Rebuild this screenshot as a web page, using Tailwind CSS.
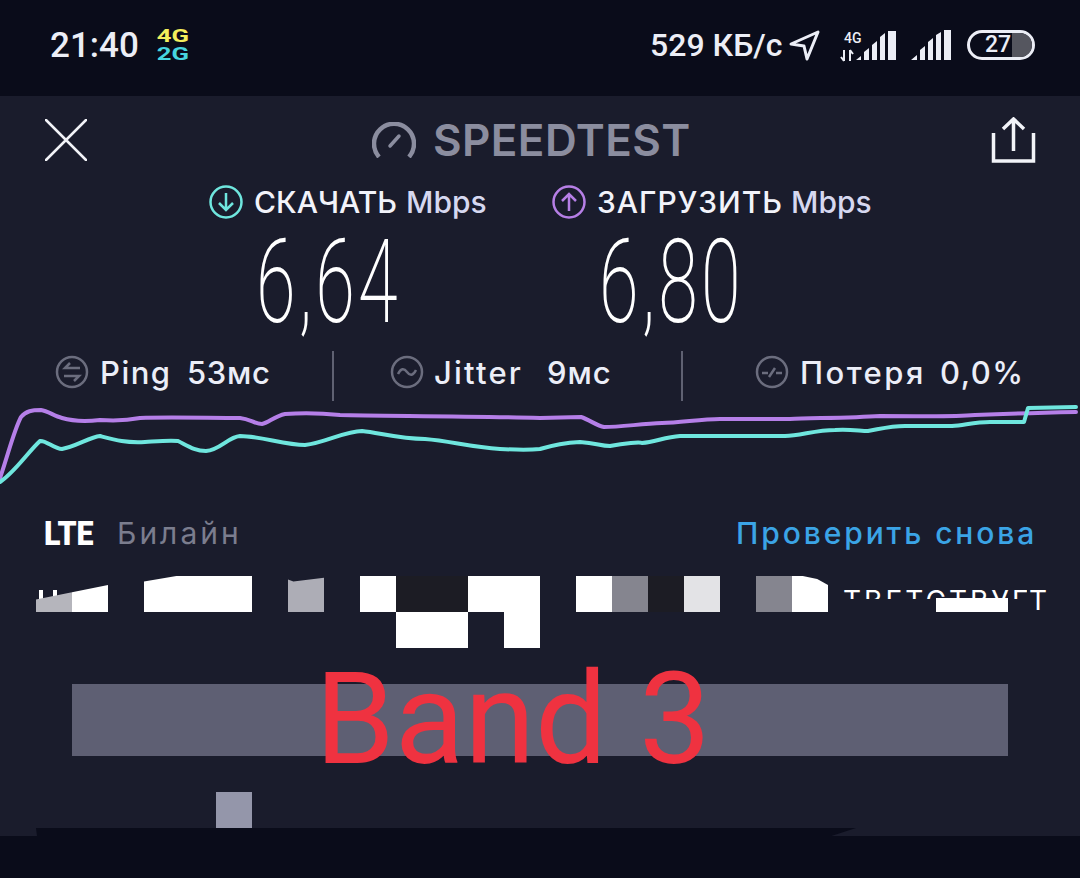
<!DOCTYPE html>
<html lang="ru">
<head>
    <meta charset="UTF-8">
    <meta name="viewport" content="width=device-width, initial-scale=1.0">
    <title>Speedtest</title>
    <script src="https://cdn.jsdelivr.net/npm/@tailwindcss/browser@4"></script>
</head>
<body class="bg-[#0a0c1a] font-[Inter,sans-serif] w-[1080px] h-[878px] overflow-hidden">
    <!-- status bar -->
    <div class="h-[96px] pb-[6px] flex items-center font-[Roboto,sans-serif] text-[#eceef6]">
        <span class="ml-[50px] w-[89px] text-[35px] font-medium leading-none">21:40</span>
        <div class="ml-[18px] w-[32px] flex flex-col items-center text-[19px] leading-[18px] font-bold">
            <span class="text-[#f3ee5c] scale-x-[1.35]">4G</span>
            <span class="text-[#47d5df] scale-x-[1.35]">2G</span>
        </div>
        <span class="ml-[461px] w-[130px] text-[32px] font-medium leading-none whitespace-nowrap">529 КБ/с</span>
        <svg class="ml-[9px]" width="32" height="32" viewBox="0 0 32 32" fill="none" stroke="#eceef6" stroke-width="3" stroke-linejoin="round"><path d="M2 15 29 3 18 30 15 17Z"/></svg>
        <svg class="ml-[19px]" width="58" height="34" viewBox="0 0 58 34" fill="#eceef6">
            <path d="M16 32 21 28V32ZM24 32V24L29 20V32ZM32 32V17L37 13V32ZM40 32V9L45 5V32ZM48 32V3H56V32Z"/>
            <text x="4" y="15" font-family="Roboto" font-size="14" font-weight="500">4G</text>
            <path d="M4 22V33M1 29 4 33 M10 33V22M10 22 13 26" stroke="#eceef6" stroke-width="2" fill="none"/>
        </svg>
        <svg class="ml-[12px]" width="42" height="34" viewBox="0 0 42 34" fill="#eceef6"><path d="M1 32 7 27V32ZM10 32V22L15 18V32ZM18 32V14L23 10V32ZM26 32V7L31 4V32ZM34 32V2H41V32Z"/></svg>
        <div class="ml-[15px] w-[68px] h-[30px] border-[3px] border-[#eceef6] rounded-full relative overflow-hidden flex items-center justify-center">
            <div class="absolute right-0 top-0 bottom-0 w-[20px] bg-[#55565f]"></div>
            <span class="relative text-[23px] font-medium -ml-[6px]">27</span>
        </div>
    </div>

    <main class="h-[740px] bg-[#1a1c2c]">
        <!-- title -->
        <div class="h-[88px] flex items-center relative">
            <svg class="ml-[45px]" width="42" height="42" viewBox="0 0 42 42" fill="none" stroke="#f2f3f8" stroke-width="2.5" stroke-linecap="round"><path d="M1 1 41 41M41 1 1 41"/></svg>
            <svg class="ml-[285px]" width="44" height="36" viewBox="0 0 44 36" fill="none" stroke="#8b8d9f" stroke-width="4.5"><path d="M7 35A20 20 0 1 1 37 35"/><path d="M18 24 27 14" stroke-width="3.5" stroke-linecap="round"/></svg>
            <span class="ml-[17px] text-[44px] font-semibold tracking-[0.4px] leading-none text-[#8b8d9f] whitespace-nowrap">SPEEDTEST</span>
            <svg class="absolute left-[991px] top-[21px]" width="45" height="46" viewBox="0 0 45 46" fill="none" stroke="#f2f3f8" stroke-width="3.5"><path d="M2.500 16V44H42.500V16"/><path d="M22.500 34V3M12 12 22.500 2 33 12"/></svg>
        </div>

        <!-- labels -->
        <div class="h-[36px] flex items-center text-[30px] font-medium whitespace-nowrap leading-none">
            <svg class="ml-[209px]" width="34" height="34" viewBox="0 0 34 34" fill="none" stroke="#6fe6de" stroke-width="2.500"><circle cx="17" cy="17" r="15.500"/><path d="M17 8V25M10 18 17 25 24 18"/></svg>
            <span class="ml-[11px] w-[152px] text-[#f2f3fa]">СКАЧАТЬ</span>
            <span class="w-[146px] text-[#d6d8f0]">Mbps</span>
            <svg width="34" height="34" viewBox="0 0 34 34" fill="none" stroke="#b67fe6" stroke-width="2.500"><circle cx="17" cy="17" r="15.500"/><path d="M17 26V9M10 16 17 9 24 16"/></svg>
            <span class="ml-[11px] w-[194px] text-[#f2f3fa] tracking-[1px]">ЗАГРУЗИТЬ</span>
            <span class="text-[#d6d8f0]">Mbps</span>
        </div>

        <!-- results -->
        <div class="h-[124px] flex items-center font-[Roboto,sans-serif] font-extralight text-[116px] tracking-[5px] leading-none text-white">
            <span class="ml-[256px] w-[343px] origin-left scale-x-[0.62]">6,64</span>
            <span class="origin-left scale-x-[0.62]">6,80</span>
        </div>

        <!-- ping, jitter, loss -->
        <div class="h-[56px] flex items-center text-[31px] font-medium tracking-[1.5px] text-[#eceef8] whitespace-nowrap leading-none">
            <svg class="ml-[55px]" width="34" height="34" viewBox="0 0 34 34" fill="none" stroke="#6b6d7e" stroke-width="2.500"><circle cx="17" cy="17" r="15"/><path d="M25 13H10L15 8M9 21H24L19 26"/></svg>
            <span class="ml-[11px] w-[87px]">Ping</span>
            <span class="w-[145px] tracking-[0.700px]">53мс</span>
            <div class="mt-[8px] w-[2px] h-[50px] bg-[#5f6172]"></div>
            <svg class="ml-[56px]" width="34" height="34" viewBox="0 0 34 34" fill="none" stroke="#6b6d7e" stroke-width="2.500"><circle cx="17" cy="17" r="15"/><path d="M8 19C11 13 14 13 17 17S23 21 26 15"/></svg>
            <span class="ml-[10px] w-[113px] tracking-[2.200px]">Jitter</span>
            <span class="w-[134px] tracking-[1px]">9мс</span>
            <div class="mt-[8px] w-[2px] h-[50px] bg-[#5f6172]"></div>
            <svg class="ml-[72px]" width="34" height="34" viewBox="0 0 34 34" fill="none" stroke="#6b6d7e" stroke-width="2.500"><circle cx="17" cy="17" r="15"/><path d="M7 18H13M21 18H27M14 22 20 13"/></svg>
            <span class="ml-[11px] w-[140px] tracking-[2.500px]">Потеря</span>
            <span>0,0%</span>
        </div>

        <!-- graph -->
        <svg class="block" width="1080" height="100" viewBox="0 400 1080 100" fill="none" stroke-width="4" stroke-linejoin="round" stroke-linecap="round">
            <path stroke="#b57fe8" d="M0 478C8 455 14 430 21 417 26 411 32 410 41 410 48 411 54 416 62 418 72 421 82 422 100 420 115 421 125 421 140 418 165 417 210 418 240 418 250 419 255 424 262 424 268 423 275 416 285 414 300 413 320 413 340 415 380 416 470 416 540 418L581 417C590 420 597 426 604 427 620 427 640 424 662 423 680 423 700 419 720 419H790C810 418 850 418 880 416 930 416 950 417 975 415 1000 414 1030 413 1076 412"/>
            <path stroke="#6fe6de" d="M0 482C15 472 28 452 40 441 46 440 54 449 62 449 75 447 90 437 100 436 115 440 125 443 145 442 160 441 170 440 178 441 188 446 195 451 206 451 220 450 228 437 240 436 260 436 285 445 305 445 325 443 345 431 362 431 380 433 400 439 425 439 450 441 470 447 500 449 520 450 530 450 540 449 550 446 562 443 580 442 597 443 600 446 610 446 625 443 640 442 642 443 655 442 665 437 680 436H785C800 436 815 430 835 430 850 429 860 431 868 431 880 429 890 426 905 426H952C965 425 975 422 990 422H1024L1028 408 1076 407"/>
        </svg>

        <!-- network row -->
        <div class="h-[66px] flex items-center whitespace-nowrap leading-none">
            <span class="ml-[44px] w-[73px] font-[Roboto,sans-serif] font-black text-[33px] text-white origin-left scale-x-[0.92]">LTE</span>
            <span class="w-[619px] text-[30px] tracking-[3px] text-[#7b7d8e]">Билайн</span>
            <span class="text-[30px] font-medium tracking-[2.900px] text-[#3ba4e6]">Проверить снова</span>
        </div>

        <!-- redacted blocks -->
        <div class="mt-[10px] ml-[36px] relative grid grid-cols-[repeat(28,36px)] grid-rows-[36px_36px]">
            <div class="col-start-1 row-start-1 bg-[#b5b5bc] [clip-path:polygon(0_65%,100%_45%,100%_100%,0_100%)]"></div>
            <div class="col-start-1 row-start-1 flex gap-[10px] pt-[14px] pl-[3px]">
                <div class="w-[4px] h-[10px] bg-white"></div>
                <div class="w-[4px] h-[8px] bg-white"></div>
            </div>
            <div class="col-start-2 row-start-1 bg-white [clip-path:polygon(0_45%,100%_25%,100%_100%,0_100%)]"></div>
            <div class="col-start-4 col-span-3 row-start-1 bg-white [clip-path:polygon(0_15%,30%_0,100%_0,100%_100%,0_100%)]"></div>
            <div class="col-start-8 row-start-1 bg-[#adadb6] [clip-path:polygon(0_10%,15%_15%,100%_5%,100%_100%,0_100%)]"></div>
            <div class="col-start-10 row-start-1 bg-white"></div>
            <div class="col-start-11 col-span-2 row-start-1 bg-[#1c1c24]"></div>
            <div class="col-start-13 col-span-2 row-start-1 bg-white"></div>
            <div class="col-start-11 col-span-2 row-start-2 bg-white"></div>
            <div class="col-start-14 row-start-2 bg-white"></div>
            <div class="col-start-16 row-start-1 bg-white"></div>
            <div class="col-start-17 row-start-1 bg-[#85858f]"></div>
            <div class="col-start-18 row-start-1 bg-[#1c1c24]"></div>
            <div class="col-start-19 row-start-1 bg-[#e3e3e6]"></div>
            <div class="col-start-21 row-start-1 bg-[#85858f]"></div>
            <div class="col-start-22 row-start-1 bg-white [clip-path:polygon(0_0,30%_0,70%_8%,100%_25%,100%_100%,0_100%)]"></div>
            <!-- clipped text after the blocks -->
            <div class="absolute left-[807px] top-[11px] w-[184px] h-[12px] overflow-hidden">
                <span class="block text-[28px] leading-none text-white whitespace-nowrap tracking-[3px]">ТВЕТСТВУЕ</span>
            </div>
            <div class="absolute left-[900px] top-[22px] w-[72px] h-[14px] bg-white"></div>
            <div class="absolute left-[993px] top-[11px] w-[20px] h-[23px] overflow-hidden text-[28px] leading-none text-white">Т</div>
        </div>

        <!-- band overlay -->
        <div class="mt-[36px] ml-[72px] w-[936px] h-[72px] bg-[#5e5f73] relative">
            <span class="absolute left-[243px] -top-[29px] font-[Roboto,sans-serif] text-[128px] leading-none text-[#ef3240] whitespace-nowrap">Band 3</span>
        </div>

        <div class="mt-[36px] ml-[216px] w-[36px] h-[36px] bg-[#9496aa]"></div>
        <div class="h-[8px] ml-[36px] w-[820px] bg-[#0a0c1a] [clip-path:polygon(0_0,100%_0,97%_100%,1px_100%)]"></div>
    </main>
</body>
</html>
